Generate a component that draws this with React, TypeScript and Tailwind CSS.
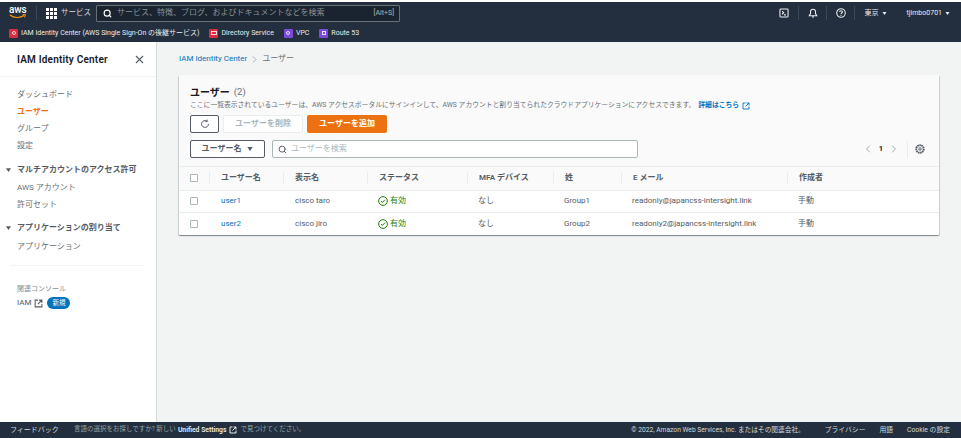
import { ChevronLeft, ChevronRight, Search, X } from 'lucide-react'

const font = '[font-family:Roboto,"Noto_Sans_CJK_JP",sans-serif]'
const columns = 'grid grid-cols-[30px_74px_84px_100px_86px_68px_166px_1fr]'

const users = [
  { name: 'user1', display: 'cisco taro', group: 'Group1', email: 'readonly@japancss-intersight.link' },
  { name: 'user2', display: 'cisco jiro', group: 'Group2', email: 'readonly2@japancss-intersight.link' },
]

function ExternalIcon({ className }: { className: string }) {
  return (
    <svg viewBox="0 0 16 16" fill="none" stroke="currentColor" strokeWidth="1.8" className={className}>
      <path d="M7 2H2v12h12V9" />
      <path d="M9 2h5v5M14 2 7 9" />
    </svg>
  )
}

function Caret({ className }: { className: string }) {
  return (
    <svg viewBox="0 0 8 6" fill="currentColor" className={className}>
      <path d="M0 0h8L4 6z" />
    </svg>
  )
}

function AwsLogo() {
  return (
    <div className="relative h-[16px] w-[18px] shrink-0">
      <span className="block text-[10px] leading-[10px] font-medium tracking-[-0.2px] text-white">aws</span>
      <svg viewBox="0 0 18 6" fill="none" className="absolute left-0 top-[9px] h-[6px] w-[18px]">
        <path d="M1 1c4 3.2 10 3.2 14 .6" stroke="#f90" strokeWidth="1.2" />
        <path d="M13.5 .8 16.5 .6 15.5 3.4" stroke="#f90" strokeWidth="1" />
      </svg>
    </div>
  )
}

function Favorite({ color, label, icon }: { color: string; label: string; icon: string }) {
  return (
    <div className="flex items-center gap-[3px]">
      <span className={`flex h-[9px] w-[9px] items-center justify-center rounded-[1px] ${color}`}>
        <span className={`border border-white/80 ${icon}`} />
      </span>
      <span>{label}</span>
    </div>
  )
}

function TopBar() {
  return (
    <header className="mt-[2px] h-[40px] shrink-0 bg-[#232f3e] text-white">
      <div className="flex h-[22px] items-center pl-[9px] pr-[11px]">
        <AwsLogo />
        <div className="ml-[9px] h-[14px] w-px bg-[#3b4856]" />
        <svg viewBox="0 0 11 11" fill="currentColor" className="ml-[9px] h-[11px] w-[11px]">
          <path d="M0 0h3v3H0zM4 0h3v3H4zM8 0h3v3H8zM0 4h3v3H0zM4 4h3v3H4zM8 4h3v3H8zM0 8h3v3H0zM4 8h3v3H4zM8 8h3v3H8z" />
        </svg>
        <span className="ml-[4px] text-[7.5px] text-[#d5dbdb]">サービス</span>
        <div className="ml-[5px] flex h-[17px] w-[304px] items-center rounded-[1px] border border-[#687078] bg-[#1a2430] pl-[6px] pr-[5px]">
          <Search className="h-[9px] w-[9px]" strokeWidth={3} />
          <span className="ml-[5px] text-[8px] text-[#879196]">サービス、特徴、ブログ、およびドキュメントなどを検索</span>
          <span className="ml-auto text-[7px] text-[#aab7b8]">[Alt+S]</span>
        </div>
        <div className="ml-auto flex items-center text-[#eaeded]">
          <svg viewBox="0 0 16 16" fill="none" stroke="currentColor" strokeWidth="1.7" className="h-[10px] w-[10px]">
            <rect x="1.5" y="1.5" width="13" height="13" rx="1.5" />
            <path d="m5 5 2.5 2.5L5 10M8 11h3" />
          </svg>
          <div className="mx-[9px] h-[14px] w-px bg-[#3b4856]" />
          <svg viewBox="0 0 16 16" fill="none" stroke="currentColor" strokeWidth="1.7" className="h-[10px] w-[10px]">
            <path d="M2 12.5h12L12 9V6a4 4 0 0 0-8 0v3zM6.5 14.5h3" />
          </svg>
          <div className="mx-[8.5px] h-[14px] w-px bg-[#3b4856]" />
          <svg viewBox="0 0 16 16" fill="none" stroke="currentColor" strokeWidth="1.7" className="h-[10px] w-[10px]">
            <circle cx="8" cy="8" r="6.8" />
            <path d="M5.7 6.2C5.9 3.6 10.2 3.6 10.3 6.2c0 1.900-2.300 1.800-2.300 3.600M8 11v1.400" />
          </svg>
          <div className="ml-[8px] mr-[10px] h-[14px] w-px bg-[#3b4856]" />
          <span className="text-[7px]">東京</span>
          <Caret className="ml-[3px] h-[3px] w-[5px]" />
          <span className="ml-[20px] text-[7px]">tjimbo0701</span>
          <Caret className="ml-[3px] h-[3px] w-[5px]" />
        </div>
      </div>
      <div className="flex h-[18px] items-center gap-[10px] pl-[9px] text-[7px] text-[#eaeded]">
        <Favorite color="bg-[#dd2c3c]" icon="h-[4px] w-[4px] rounded-full" label="IAM Identity Center (AWS Single Sign-On の後継サービス)" />
        <Favorite color="bg-[#dd2c3c]" icon="h-[4px] w-[6px]" label="Directory Service" />
        <Favorite color="bg-[#7b4ad8]" icon="h-[4px] w-[4px] rounded-full" label="VPC" />
        <Favorite color="bg-[#7b4ad8]" icon="h-[4px] w-[4px]" label="Route 53" />
      </div>
    </header>
  )
}

function Sidebar() {
  const link = 'h-[17px] leading-[17px] text-[8px] text-[#687078]'
  const section = 'flex h-[17px] items-center text-[8px] font-semibold text-[#545b64]'
  return (
    <aside className="flex w-[157px] shrink-0 flex-col border-r border-[#d5dbdb] bg-white">
      <div className="flex h-[35px] shrink-0 items-center justify-between border-b border-[#f2f3f3] pl-[17px] pr-[10px]">
        <span className="text-[10px] font-semibold tracking-[0.2px] text-[#16191f]">IAM Identity Center</span>
        <X className="h-[13px] w-[13px] text-[#545b64]" strokeWidth={2} />
      </div>
      <nav className="flex flex-col pl-[17px] pr-[11px] pt-[9px]">
        <div className={link}>ダッシュボード</div>
        <div className="h-[17px] text-[8px] leading-[17px] font-bold text-[#ec7211]">ユーザー</div>
        <div className={link}>グループ</div>
        <div className={link}>設定</div>
        <div className={`${section} mt-[7px] -ml-[11px]`}>
          <Caret className="mr-[6px] h-[4px] w-[5px]" />
          マルチアカウントのアクセス許可
        </div>
        <div className={`${link} mt-[1px]`}>AWS アカウント</div>
        <div className={link}>許可セット</div>
        <div className={`${section} mt-[6px] -ml-[11px]`}>
          <Caret className="mr-[6px] h-[4px] w-[5px]" />
          アプリケーションの割り当て
        </div>
        <div className={`${link} mt-[2px]`}>アプリケーション</div>
        <div className="mt-[10px] -ml-[7px] h-px bg-[#f2f3f3]" />
        <div className="mt-[18px] text-[7px] leading-[10px] text-[#879196]">関連コンソール</div>
        <div className="mt-[3px] flex items-center text-[8px] text-[#545b64]">
          IAM
          <ExternalIcon className="ml-[3px] h-[9px] w-[9px]" />
          <span className="ml-[4px] rounded-full bg-[#0073bb] px-[5px] text-[6.5px] leading-[12px] text-white">新規</span>
        </div>
      </nav>
    </aside>
  )
}

function UsersPanel() {
  const th = 'flex items-center border-l border-[#eaeded] pl-[11px] my-[5px]'
  return (
    <section className="w-[760px] rounded-[1px] bg-white shadow-[0_1px_1px_rgba(0,28,36,0.3),1px_1px_1px_rgba(0,28,36,0.15),-1px_1px_1px_rgba(0,28,36,0.15)]">
      <div className="h-[92px] border-b border-[#eaeded] bg-[#fafafa] pl-[11px] pr-[14px] pt-[10px]">
        <div className="flex h-[15px] items-center">
          <span className="text-[10px] font-bold text-[#16191f]">ユーザー</span>
          <span className="ml-[4px] text-[9.5px] text-[#687078]">(2)</span>
        </div>
        <div className="flex h-[11px] items-center text-[6.8px] text-[#687078]">
          ここに一覧表示されているユーザーは、AWS アクセスポータルにサインインして、AWS アカウントと割り当てられたクラウドアプリケーションにアクセスできます。
          <span className="ml-[3px] font-semibold text-[#0073bb]">詳細はこちら</span>
          <ExternalIcon className="ml-[3px] h-[8px] w-[8px] text-[#0073bb]" />
        </div>
        <div className="mt-[4px] flex h-[18px] items-center gap-[4px]">
          <button className="flex h-[18px] w-[29px] items-center justify-center rounded-[2px] border border-[#545b64] bg-white text-[#545b64]">
            <svg viewBox="0 0 16 16" fill="none" stroke="currentColor" strokeWidth="1.6" className="h-[10px] w-[10px]">
              <path d="M13.5 8A5.5 5.5 0 1 1 11 3.4M11.500 1v3h-3" />
            </svg>
          </button>
          <button className="h-[18px] w-[80px] rounded-[2px] border border-[#eaeded] bg-white text-[8px] font-semibold text-[#aab7b8]">ユーザーを削除</button>
          <button className="h-[18px] w-[80px] rounded-[2px] bg-[#ec7211] text-[8px] font-bold text-white">ユーザーを追加</button>
        </div>
        <div className="mt-[7px] flex h-[18px] items-center">
          <button className="flex h-[18px] w-[75px] items-center justify-center rounded-[2px] border border-[#545b64] bg-white text-[8px] font-semibold text-[#545b64]">
            ユーザー名
            <Caret className="ml-[6px] h-[4px] w-[6px]" />
          </button>
          <div className="ml-[7px] flex h-[18px] w-[366px] items-center rounded-[2px] border border-[#aab7b8] bg-white pl-[5px]">
            <Search className="h-[9px] w-[9px] text-[#545b64]" strokeWidth={2.5} />
            <span className="ml-[4px] text-[8px] text-[#aab7b8]">ユーザーを検索</span>
          </div>
          <div className="ml-auto flex items-center">
            <ChevronLeft className="h-[12px] w-[12px] text-[#879196]" strokeWidth={1.5} />
            <span className="ml-[5px] text-[7.5px] font-bold text-[#16191f]">1</span>
            <ChevronRight className="ml-[5px] h-[12px] w-[12px] text-[#879196]" strokeWidth={1.5} />
            <div className="mx-[7px] h-[17px] w-px bg-[#eaeded]" />
            <svg viewBox="0 0 16 16" fill="none" stroke="#545b64" className="h-[10px] w-[10px]">
              <circle cx="8" cy="8" r="6" strokeWidth="3" strokeDasharray="2.5 0.8" />
              <circle cx="8" cy="8" r="2" strokeWidth="1.500" />
            </svg>
          </div>
        </div>
      </div>
      <div className={`${columns} h-[23px] bg-[#fafafa] pb-[1px] text-[8px] font-semibold text-[#545b64]`}>
        <div className="flex items-center pl-[11px]">
          <span className="h-[8px] w-[8px] rounded-[1px] border border-[#aab7b8] bg-white" />
        </div>
        <div className={th}>ユーザー名</div>
        <div className={th}>表示名</div>
        <div className={th}>ステータス</div>
        <div className={th}>MFA デバイス</div>
        <div className={th}>姓</div>
        <div className={th}>E メール</div>
        <div className={th}>作成者</div>
      </div>
      {users.map((u) => (
        <div key={u.name} className={`${columns} h-[22px] border-t border-[#eaeded] pb-[1px] text-[8px] text-[#545b64] last:h-[23px]`}>
          <div className="flex items-center pl-[11px]">
            <span className="h-[8px] w-[8px] rounded-[1px] border border-[#aab7b8] bg-white" />
          </div>
          <div className="flex items-center pl-[12px] text-[#0073bb]">{u.name}</div>
          <div className="flex items-center pl-[12px]">{u.display}</div>
          <div className="flex items-center pl-[11px] text-[#1d8102]">
            <svg viewBox="0 0 16 16" fill="none" stroke="currentColor" strokeWidth="1.6" className="mr-[2px] h-[10px] w-[10px]">
              <circle cx="8" cy="8" r="7" />
              <path d="m4.800 8 2.200 2.300 4.200-4.400" />
            </svg>
            有効
          </div>
          <div className="flex items-center pl-[11px]">なし</div>
          <div className="flex items-center pl-[11px]">{u.group}</div>
          <div className="flex items-center pl-[11px]">{u.email}</div>
          <div className="flex items-center pl-[11px]">手動</div>
        </div>
      ))}
    </section>
  )
}

function Footer() {
  return (
    <footer className="flex h-[16px] shrink-0 items-center bg-[#232f3e] pl-[10px] pr-[11px] text-[6.8px] text-[#d5dbdb]">
      <span className="text-[7px]">フィードバック</span>
      <span className="ml-[15px] text-[6.5px] text-[#95a5a6]">言語の選択をお探しですか? 新しい</span>
      <span className="ml-[2px] font-semibold text-[#eaeded]">Unified Settings</span>
      <ExternalIcon className="ml-[3px] h-[8px] w-[8px] text-white" />
      <span className="ml-[3px] text-[6.5px] text-[#95a5a6]">で見つけてください。</span>
      <span className="ml-auto text-[6.7px]">© 2022, Amazon Web Services, Inc. またはその関連会社。</span>
      <span className="ml-[20px]">プライバシー</span>
      <span className="ml-[14px]">用語</span>
      <span className="ml-[14px]">Cookie の設定</span>
    </footer>
  )
}

export default function App() {
  return (
    <div className={`${font} flex h-[438px] w-[961px] flex-col overflow-hidden bg-white`}>
      <TopBar />
      <div className="flex min-h-0 flex-1">
        <Sidebar />
        <main className="min-w-0 flex-1 bg-[#f2f3f3] pl-[22px]">
          <div className="flex h-[33px] items-center pt-[1px] text-[8px]">
            <span className="text-[#0073bb]">IAM Identity Center</span>
            <ChevronRight className="mx-[2px] h-[11px] w-[11px] text-[#879196]" strokeWidth={1.5} />
            <span className="text-[#687078]">ユーザー</span>
          </div>
          <UsersPanel />
        </main>
      </div>
      <Footer />
    </div>
  )
}
